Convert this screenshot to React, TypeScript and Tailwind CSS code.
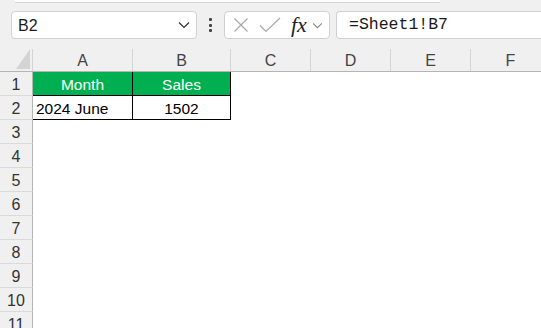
import React from "react";

const cols = [
  { l: "A", w: 100 },
  { l: "B", w: 98 },
  { l: "C", w: 80 },
  { l: "D", w: 80 },
  { l: "E", w: 80 },
  { l: "F", w: 80 },
];

function Chevron({ className }: { className?: string }) {
  return (
    <svg viewBox="0 0 12 8" className={className} fill="none" stroke="currentColor" strokeWidth="1.2">
      <path d="M1 1.5 L6 6.5 L11 1.5" />
    </svg>
  );
}

export default function App() {
  const rows = Array.from({ length: 11 }, (_, i) => i + 1);
  return (
    <div
      className="w-[541px] h-[328px] overflow-hidden bg-[#f0f0f0] flex flex-col"
      style={{ fontFamily: '"Liberation Sans", Arial, sans-serif' }}
    >
      {/* top strip */}
      <div className="h-[4px] flex">
        <div className="ml-[15px] w-[425px] h-[3px] bg-white border-b border-[#d6d6d6]" />
      </div>
      {/* toolbar */}
      <div className="mt-[8px] h-[28px] flex items-center">
        <div className="ml-[11px] w-[186px] h-[28px] bg-white border border-[#d1d1d1] rounded-[4px] flex items-center pl-[6px] pr-[6px]">
          <span className="text-[16px] text-[#1a1a1a] flex-1 leading-none pt-[1px]">B2</span>
          <Chevron className="w-[12px] h-[8px] text-[#333]" />
        </div>
        <div className="w-[27px] flex flex-col items-center gap-[2.5px]">
          <div className="w-[3px] h-[3px] bg-[#444] rounded-[1px]" />
          <div className="w-[3px] h-[3px] bg-[#444] rounded-[1px]" />
          <div className="w-[3px] h-[3px] bg-[#444] rounded-[1px]" />
        </div>
        <div className="w-[106px] h-[28px] bg-white border border-[#d1d1d1] rounded-[4px] flex items-center">
          <svg viewBox="0 0 16 16" className="ml-[8px] w-[16px] h-[16px]" fill="none" stroke="#a8a8a8" strokeWidth="1.2">
            <path d="M1.5 1.5 L14.5 14.5 M14.5 1.5 L1.5 14.5" />
          </svg>
          <svg viewBox="0 0 22 16" className="ml-[10px] w-[22px] h-[16px]" fill="none" stroke="#a8a8a8" strokeWidth="1.2">
            <path d="M1 8.5 L7 14.5 L21 1" />
          </svg>
          <span
            className="ml-[10px] text-[22px] italic text-[#222] leading-none"
            style={{ fontFamily: '"Liberation Serif", "Times New Roman", serif' }}
          >
            fx
          </span>
          <Chevron className="ml-[5px] w-[11px] h-[7px] text-[#888]" />
        </div>
        <div className="ml-[6px] flex-1 h-[28px] bg-white border border-[#d1d1d1] border-r-0 rounded-l-[4px] flex items-center pl-[12px]">
          <span
            className="text-[16.5px] text-[#1a1a1a] leading-none"
            style={{ fontFamily: '"Liberation Mono", "DejaVu Sans Mono", monospace' }}
          >
            =Sheet1!B7
          </span>
        </div>
      </div>
      {/* grid */}
      <div className="mt-[8px] flex flex-col">
        {/* column header */}
        <div className="flex h-[25px] border-b border-[#b5b5b5]">
          <div className="w-[33px] shrink-0 relative">
            <svg viewBox="0 0 14 20" className="absolute right-[3px] bottom-[2px] w-[14px] h-[20px]">
              <path d="M14 0 L14 20 L0 20 Z" fill="#d4d4d4" />
            </svg>
            <div className="absolute right-0 top-[2px] bottom-0 w-px bg-[#d4d4d4]" />
          </div>
          {cols.map((c) => (
            <div
              key={c.l}
              className="shrink-0 flex items-center justify-center text-[16px] text-[#444] border-r border-[#d4d4d4] mt-[2px] pt-[2px]"
              style={{ width: c.w }}
            >
              {c.l}
            </div>
          ))}
        </div>
        {rows.map((r) => (
          <div key={r} className="flex h-[24px]">
            <div className="w-[33px] shrink-0 border-r border-[#b5b5b5] border-b border-b-[#dadada] flex items-center justify-center text-[16px] text-[#333] pt-[3px]">
              {r}
            </div>
            {r === 1 && (
              <>
                <div className="w-[100px] shrink-0 bg-[#00b050] text-white border-r border-b border-black flex items-center justify-center text-[15.5px] pt-[3px]">
                  Month
                </div>
                <div className="w-[98px] shrink-0 bg-[#00b050] text-white border-r border-b border-black flex items-center justify-center text-[15.5px] pt-[3px]">
                  Sales
                </div>
              </>
            )}
            {r === 2 && (
              <>
                <div className="w-[100px] shrink-0 bg-white text-black border-r border-b border-black flex items-center pl-[3px] text-[15.5px] pt-[3px]">
                  2024 June
                </div>
                <div className="w-[98px] shrink-0 bg-white text-black border-r border-b border-black flex items-center justify-center text-[15.5px] pt-[3px]">
                  1502
                </div>
              </>
            )}
            <div className="flex-1 bg-white" />
          </div>
        ))}
      </div>
    </div>
  );
}
